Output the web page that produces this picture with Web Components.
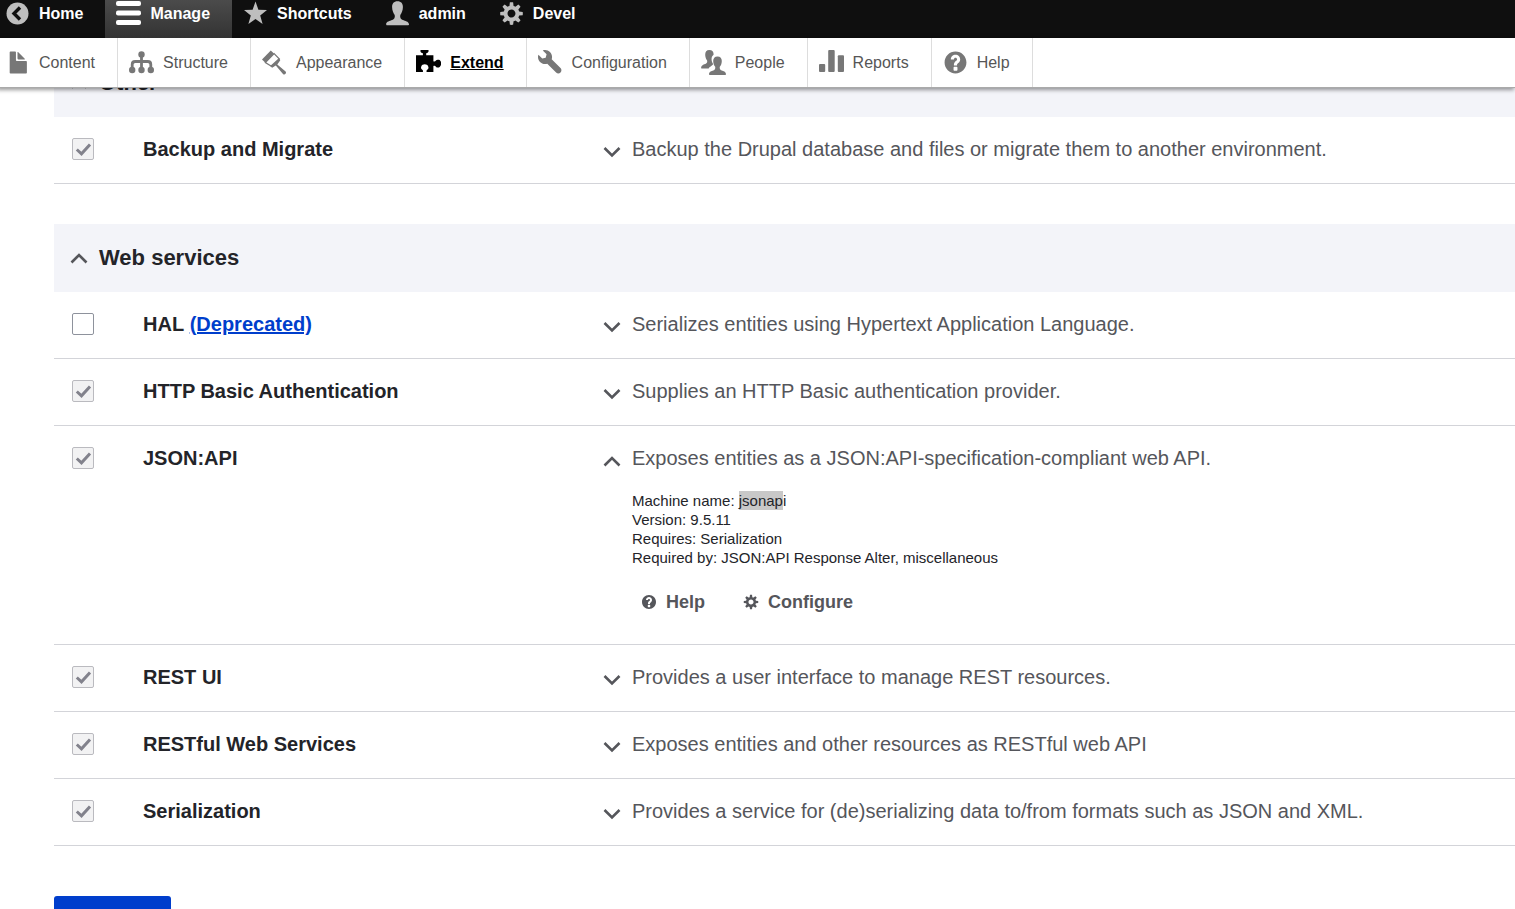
<!DOCTYPE html>
<html lang="en">
<head>
<meta charset="utf-8">
<title>Extend</title>
<style>
  body { margin: 0; background: #fff; color: #232429; font-family: "Liberation Sans", Arial, sans-serif; }
</style>
</head>
<body>
<admin-page>
  <admin-toolbar slot="toolbar">
    <toolbar-item slot="bar" kind="bar" icon="back" first>Home</toolbar-item>
    <toolbar-item slot="bar" kind="bar" icon="menu" active>Manage</toolbar-item>
    <toolbar-item slot="bar" kind="bar" icon="star">Shortcuts</toolbar-item>
    <toolbar-item slot="bar" kind="bar" icon="person">admin</toolbar-item>
    <toolbar-item slot="bar" kind="bar" icon="cog">Devel</toolbar-item>
    <toolbar-item slot="tray" kind="tray" icon="file" first>Content</toolbar-item>
    <toolbar-item slot="tray" kind="tray" icon="chart">Structure</toolbar-item>
    <toolbar-item slot="tray" kind="tray" icon="brush">Appearance</toolbar-item>
    <toolbar-item slot="tray" kind="tray" icon="puzzle" active>Extend</toolbar-item>
    <toolbar-item slot="tray" kind="tray" icon="wrench">Configuration</toolbar-item>
    <toolbar-item slot="tray" kind="tray" icon="people">People</toolbar-item>
    <toolbar-item slot="tray" kind="tray" icon="bars">Reports</toolbar-item>
    <toolbar-item slot="tray" kind="tray" icon="help">Help</toolbar-item>
  </admin-toolbar>
  <module-package package="other">Other</module-package>
  <module-package package="web">Web services</module-package>
  <submit-button></submit-button>
</admin-page>

<script>
const COG = '<path d="M15.176 9.041c.045-.327.076-.658.076-.998 0-.36-.035-.71-.086-1.056l-2.275-.293c-.115-.426-.283-.827-.498-1.201l1.396-1.808c-.416-.551-.906-1.039-1.459-1.452l-1.807 1.391c-.373-.215-.774-.383-1.2-.499l-.292-2.252c-.338-.048-.677-.081-1.029-.081s-.694.033-1.032.082l-.291 2.251c-.426.116-.826.284-1.2.499l-1.805-1.391c-.552.413-1.044.901-1.459 1.452l1.395 1.808c-.215.374-.383.774-.499 1.2l-2.276.294c-.05.346-.085.696-.085 1.056 0 .34.031.671.077.998l2.285.295c.115.426.284.826.499 1.2l-1.417 1.836c.411.55.896 1.038 1.443 1.452l1.842-1.42c.374.215.774.383 1.2.498l.298 2.311c.337.047.677.08 1.025.08s.688-.033 1.021-.08l.299-2.311c.426-.115.826-.283 1.201-.498l1.842 1.42c.547-.414 1.031-.902 1.443-1.452l-1.416-1.837c.215-.373.383-.773.498-1.199l2.286-.295zm-7.174 1.514c-1.406 0-2.543-1.137-2.543-2.541 0-1.402 1.137-2.541 2.543-2.541 1.402 0 2.541 1.138 2.541 2.541 0 1.404-1.139 2.541-2.541 2.541z"/>';
const HELP = '<path d="M8.002 1c-3.868 0-7.002 3.134-7.002 7s3.134 7 7.002 7c3.865 0 7-3.134 7-7s-3.135-7-7-7zm3 5c0 .551-.16 1.085-.477 1.586l-.158.22c-.07.093-.189.241-.361.393-.168.148-.35.299-.545.447l-.203.189-.141.129-.096.17-.021.235v.63h-2.001v-.704c.026-.396.078-.73.204-.999.125-.269.271-.498.439-.688l.225-.21-.01-.015.176-.14.137-.128c.186-.139.357-.277.516-.417l.148-.18c.098-.152.168-.323.168-.518 0-.552-.447-1-1.002-1s-.998.448-.998 1h-2c0-1.657 1.343-3 3-3s3 1.343 3 3zm-1.75 6.619c0 .344-.281.625-.625.625h-1.25c-.345 0-.626-.281-.626-.625v-1.238c0-.344.281-.625.626-.625h1.25c.344 0 .625.281.625.625v1.238z"/>';

// name: [viewBox, markup]
const ICONS = {
  cog: ['0 0 16 16', COG],
  help: ['0 0 16 16', HELP],
  back: ['0 0 25 25', '<circle cx="12.5" cy="12.5" r="11"/><path d="M15 6.5l-6 6 6 6" fill="none" stroke="#0f0f0f" stroke-width="3.4"/>'],
  menu: ['0 0 25 25', '<g fill="#fff"><rect y="0" width="25" height="5" rx="2"/><rect y="9.500" width="25" height="5" rx="2"/><rect y="19" width="25" height="5" rx="2"/></g>'],
  star: ['0 0 25 25', '<path d="M12.500.5l2.900 8.300 8.600.2-6.800 5.400 2.400 8.700-7.100-5.100-7.100 5.100 2.400-8.700L1 9l8.600-.2z"/>'],
  person: ['0 0 25 25', '<path d="M12.500.3c3.700 0 5.400 2.300 5.400 5.700 0 3.400-1.300 6.300-2.600 7.900-.5 2.600.4 4.200 2.500 5.200 2.400 1 5.700 1.300 6.200 4.200.1.500-.2.900-.7.900H1.700c-.5 0-.8-.4-.7-.9.500-2.900 3.800-3.200 6.200-4.200 2.100-1 3-2.600 2.500-5.200C8.400 12.300 7.100 9.400 7.100 6c0-3.400 1.700-5.700 5.400-5.700z"/>'],
  file: ['0 0 16 16', '<path d="M12.502 7h-5c-.276 0-.502-.225-.502-.5v-5c0-.275-.225-.5-.5-.5h-3c-.275 0-.5.225-.5.5v13.029c0 .275.225.5.5.5h10c.275 0 .5-.225.5-.5v-7.029c0-.275-.225-.5-.498-.5zM8.502 6h4c.275 0 .34-.159.146-.354l-4.293-4.292c-.195-.195-.353-.129-.353.146v4c0 .275.225.5.5.5z"/>'],
  chart: ['0 0 25 25', '<circle cx="12.500" cy="4.500" r="3.200"/><circle cx="3.200" cy="20" r="3.200"/><circle cx="12.500" cy="20" r="3.200"/><circle cx="21.800" cy="20" r="3.200"/><path d="M12.500 5v14M3.200 19v-4.500q0-3 3-3h12.600q3 0 3 3V19" fill="none" stroke="currentColor" stroke-width="2.800"/>'],
  brush: ['0 0 25 25', '<path d="M0 9.500L8.800.6l3.400 3.200-8.600 9.200z"/><path d="M3.400 12.600l8.700-9 5.300 5.500-7.600 7.400z" fill="#fff" stroke="currentColor" stroke-width="1.200"/><path d="M16.800 8.300l1.500 2-3 4.200 8.300 6.900c1.300 1.800-.800 4-2.600 2.500L13.800 15.600l-3.600 2.100-2-1.700z"/>'],
  puzzle: ['0 0 25 25', '<path d="M4.600 0h7.800c.7 2-.6 2.900-2.200 3.300v2h7.200v5.900c1.200.4 1.900.1 2.500-.7.700-.9 1.800-1 3-.7 3 .8 3 6.600 0 7.600-1.200.3-2.300.2-3-.7-.6-.8-1.300-1.100-2.500-.7v6h-6.700c-.5-1.300-.2-2 .8-2.600.9-.6 1.200-1.500.8-2.700-.9-3.200-6.200-3.200-7.100 0-.4 1.200-.1 2.100.8 2.700 1 .6 1.300 1.300.8 2.600H0V5.300h6.900v-2C5.300 2.900 4 2 4.600 0z"/>'],
  wrench: ['0 0 16 16', '<path d="M14.416 11.586l-.01-.008v-.001l-5.656-5.656c.15-.449.252-.921.252-1.421 0-2.485-2.016-4.500-4.502-4.500-.505 0-.981.102-1.434.255l2.431 2.431-.588 2.196-2.196.588-2.445-2.445c-.162.464-.268.956-.268 1.475 0 2.486 2.014 4.500 4.500 4.500.5 0 .972-.102 1.421-.251l5.667 5.665c.781.781 2.047.781 2.828 0s.781-2.047 0-2.828z"/>'],
  people: ['0 0 25 25', '<path d="M8.300 0c3 0 4.500 2 4.300 4.800-1.500 1.200-2.200 2.700-2 4.900.1 1.600.7 3 1.500 4.200.1 1.200-2.200 2-3.600 3.300-.3.400-.6.800-.8 1.200H.6c-.4 0-.6-.3-.5-.7C.5 15 3 14.500 4.800 13.800c1.500-.7 1.700-2 1.200-3.500C4.900 9 4.200 7 4.200 4.800 4.200 2 5.500 0 8.300 0z"/><path d="M16.500 6.400c2.900 0 4.300 1.900 4.300 4.500 0 2.500-.9 4.600-2 5.800-.4 1.900.3 3.100 1.900 3.700 1.800.6 4 .9 4.300 3.500 0 .6-.2 1-.7 1H8.700c-.5 0-.7-.4-.7-1 .3-2.600 2.500-2.900 4.300-3.500 1.600-.6 2.300-1.800 1.900-3.700-1.100-1.200-2-3.300-2-5.800 0-2.600 1.400-4.500 4.300-4.500z"/>'],
  bars: ['0 0 25 25', '<rect y="14" width="6.200" height="8" rx="1"/><rect x="9.200" y="0" width="6.500" height="22" rx="1"/><rect x="18.800" y="5.200" width="6.200" height="16.800" rx="1"/>']
};
const svg = (name, size) =>
  `<svg viewBox="${ICONS[name][0]}" width="${size}" height="${size}" fill="currentColor" aria-hidden="true">${ICONS[name][1]}</svg>`;

const define = (name, render) => customElements.define(name, class extends HTMLElement {
  constructor() { super(); this.attachShadow({ mode: 'open' }); }
  connectedCallback() { this.shadowRoot.innerHTML = render(this); }
});

define('admin-page', () => `
  <style>
    :host { display: block; height: 100vh; overflow: hidden; }
    ::slotted(admin-toolbar) { position: relative; z-index: 1; }
    /* The list is scrolled partly beneath the toolbar. */
    main { margin-top: -39px; padding-left: 54px; }
  </style>
  <slot name="toolbar"></slot>
  <main><slot></slot></main>`);

define('admin-toolbar', () => `
  <style>
    :host { display: block; }
    nav { display: flex; }
    .bar { background: #0f0f0f; height: 38px; }
    .tray { background: #fff; height: 49px; border-bottom: 1px solid #aaa; box-shadow: -2px 1px 4px 1px rgba(0,0,0,.4); }
  </style>
  <nav class="bar" aria-label="Toolbar items"><slot name="bar"></slot></nav>
  <nav class="tray" aria-label="Administration menu"><slot name="tray"></slot></nav>`);

define('toolbar-item', el => `
  <style>
    :host { display: flex; flex: none; font-size: 16px; line-height: 27px; }
    a { display: flex; align-items: center; gap: 9px; padding: 0 22px 0 11px; color: #565656; text-decoration: none; }
    svg { display: block; flex: none; color: #777; }
    :host([first]) a { padding-left: 5px; }
    :host([kind=bar]) a { color: #fff; font-weight: bold; padding-bottom: 11px; }
    :host([kind=bar]) svg { color: #bebebe; }
    :host([kind=bar][active]) a { background: linear-gradient(#4b4b4b, #333); }
    :host([kind=tray]) { border-right: 1px solid #ddd; }
    :host([kind=tray][active]) a { color: #000; font-weight: bold; text-decoration: underline; }
    :host([kind=tray][active]) svg { color: #000; }
  </style>
  <a href="#">${svg(el.getAttribute('icon'), 25)}<span><slot></slot></span></a>`);

const CHEVRON = d => `<svg class="chev" viewBox="0 0 18 12" width="18" height="12" fill="none" stroke="#55565b" stroke-width="2.600" aria-hidden="true"><path d="${d}"/></svg>`;
const UP = CHEVRON('M1.500 10.500l7.500-7.500 7.500 7.500');
const DOWN = CHEVRON('M1.500 2l7.500 7.500L16.500 2');

define('module-details', el => `
  <style>
    :host { display: block; }
    summary { display: flex; align-items: center; gap: 11px; font-size: 20px; line-height: 26px; color: #55565b; list-style: none; cursor: pointer; }
    .chev { display: block; flex: none; padding-top: 5px; }
    .body { padding: 20px 0 11px 29px; }
  </style>
  <details ${el.hasAttribute('expanded') ? 'open' : ''}>
    <summary>${el.hasAttribute('expanded') ? UP : DOWN}<span><slot name="summary"></slot></span></summary>
    <div class="body"><slot></slot></div>
  </details>`);

define('module-info', () => `
  <style>
    :host { display: block; }
    p { margin: 0; font-size: 15px; line-height: 19px; color: #232429; }
    .picked { padding: 1px 0; background: #c8c8c8; }
    .links { display: flex; gap: 38px; margin-top: 25px; padding-left: 9px; }
    a { display: flex; align-items: center; gap: 9px; font-size: 18px; line-height: 20px; font-weight: bold; color: #55565b; text-decoration: none; }
  </style>
  <p>Machine name: <span class="picked">jsonap</span>i</p>
  <p>Version: 9.5.11</p>
  <p>Requires: Serialization</p>
  <p>Required by: JSON:API Response Alter, miscellaneous</p>
  <div class="links"><a href="#">${svg('help', 16)}Help</a><a href="#">${svg('cog', 16)}Configure</a></div>`);

const PACKAGES = {
  other: [
    { name: 'Backup and Migrate', on: true, text: 'Backup the Drupal database and files or migrate them to another environment.' }
  ],
  web: [
    { name: 'HAL', note: '(Deprecated)', text: 'Serializes entities using Hypertext Application Language.' },
    { name: 'HTTP Basic Authentication', on: true, text: 'Supplies an HTTP Basic authentication provider.' },
    { name: 'JSON:API', on: true, open: true, text: 'Exposes entities as a JSON:API-specification-compliant web API.' },
    { name: 'REST UI', on: true, text: 'Provides a user interface to manage REST resources.' },
    { name: 'RESTful Web Services', on: true, text: 'Exposes entities and other resources as RESTful web API' },
    { name: 'Serialization', on: true, text: 'Provides a service for (de)serializing data to/from formats such as JSON and XML.' }
  ]
};

define('module-package', el => `
  <style>
    :host { display: block; margin-bottom: 40px; }
    summary { display: flex; align-items: center; gap: 11px; height: 68px; padding: 0 16px; box-sizing: border-box; background: #f3f4f9; font-size: 22px; line-height: 28px; font-weight: bold; list-style: none; cursor: pointer; }
    table { width: 100%; table-layout: fixed; border-collapse: separate; border-spacing: 0; }
    .c-check { width: 89px; }
    .c-name { width: 460px; }
    td { padding: 19px 0 21px; border-bottom: 1px solid #d3d4d9; vertical-align: top; text-align: left; font-size: 20px; line-height: 26px; }
    td.check { padding-left: 18px; }
    label { font-weight: bold; }
    a { color: #003ecc; font-weight: bold; text-decoration: underline; }
    input { appearance: none; display: block; box-sizing: border-box; width: 22px; height: 22px; margin: 2px 0 0; border: 1px solid #8e929c; border-radius: 2px; background: #fff; }
    input:disabled { border-color: #bababf; background: #f2f2f3 url("data:image/svg+xml,%3Csvg xmlns='http://www.w3.org/2000/svg' viewBox='0 0 20 20'%3E%3Cpath d='M3.800 10.500l4.700 4.300L17 5.500' fill='none' stroke='%2382828c' stroke-width='3'/%3E%3C/svg%3E") center / 20px; }
    .chev { flex: none; }
  </style>
  <details open>
    <summary>${UP}<span><slot></slot></span></summary>
    <table>
      <colgroup><col class="c-check"><col class="c-name"><col></colgroup>
      <tbody>${PACKAGES[el.getAttribute('package')].map((m, i) => `
        <tr>
          <td class="check"><input type="checkbox" id="m${i}" ${m.on ? 'checked disabled' : ''}></td>
          <td><label for="m${i}">${m.name}</label>${m.note ? ` <a href="#">${m.note}</a>` : ''}</td>
          <td><module-details ${m.open ? 'expanded' : ''}><span slot="summary">${m.text}</span>${m.open ? '<module-info></module-info>' : ''}</module-details></td>
        </tr>`).join('')}
      </tbody>
    </table>
  </details>`);

define('submit-button', () => `
  <style>
    :host { display: block; padding-top: 10px; }
    button { display: block; width: 117px; height: 54px; border: 0; border-radius: 3px; background: #003ecc; }
  </style>
  <button type="submit" aria-label="Install"></button>`);
</script>
</body>
</html>
